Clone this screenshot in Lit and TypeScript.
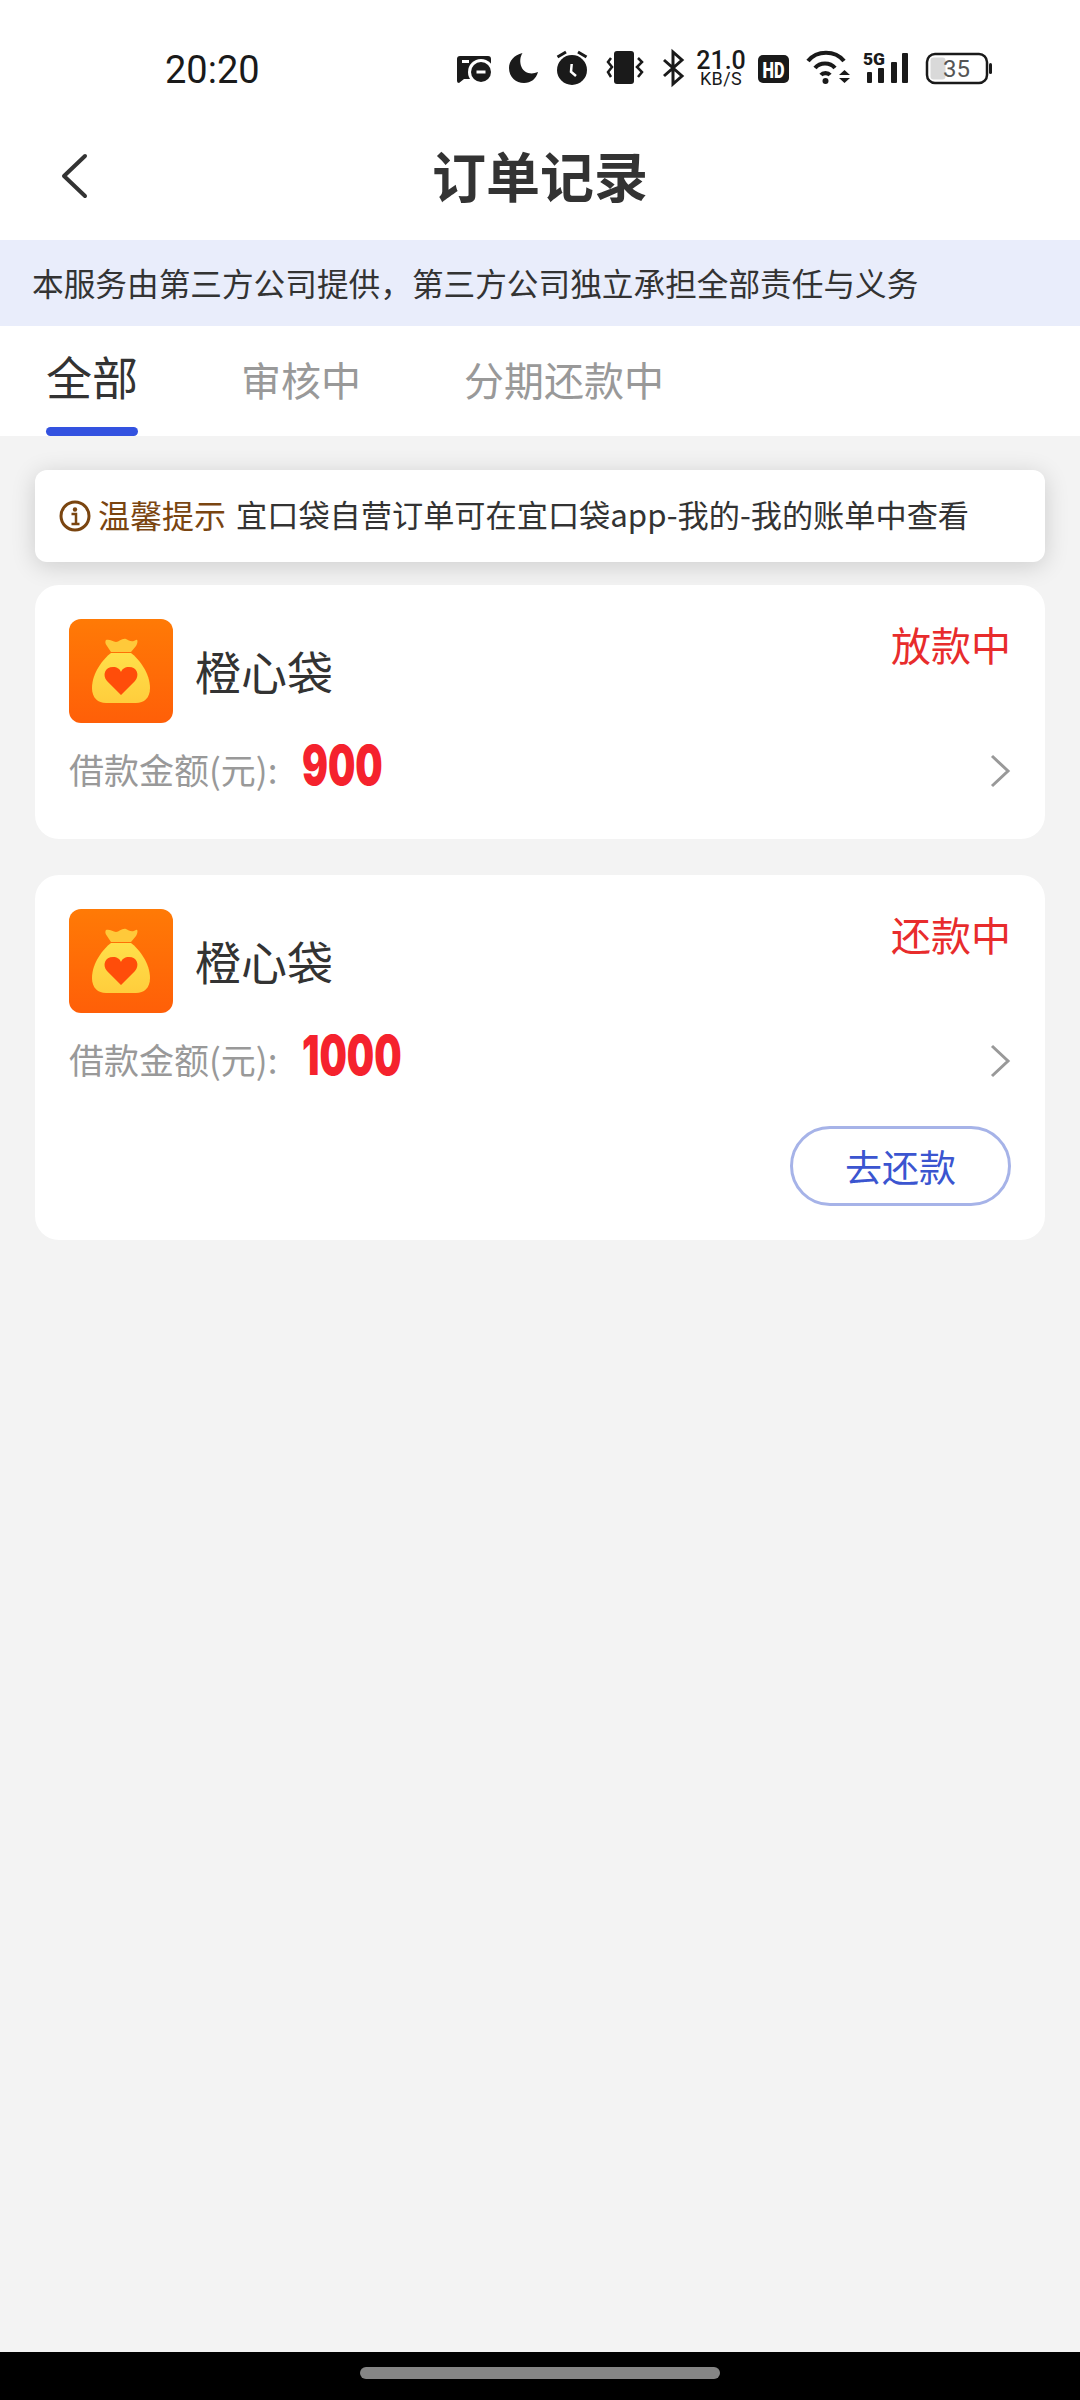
import { LitElement, html, css } from "lit";
import { customElement, property } from "lit/decorators.js";

const CJK = css`"Noto Sans CJK SC", Roboto, sans-serif`;

@customElement("order-card")
export class OrderCard extends LitElement {
  @property() name = "";
  @property() status = "";
  @property() amount = "";
  @property({ type: Boolean }) repay = false;

  static styles = css`
    :host {
      display: block;
      background: #fff;
      border-radius: 24px;
      padding: 34px 34px 34px;
      margin-bottom: 36px;
      font-family: ${CJK};
    }
    .head {
      display: flex;
      justify-content: space-between;
      align-items: flex-start;
    }
    .brand {
      display: flex;
      align-items: center;
      gap: 22px;
    }
    .logo {
      width: 104px;
      height: 104px;
      display: block;
    }
    .name {
      font-size: 46px;
      color: #333;
      margin-top: -3px;
    }
    .status {
      font-size: 40px;
      line-height: 56px;
      color: #e82c2c;
      margin-top: -3px;
    }
    .row {
      display: flex;
      align-items: center;
      height: 60px;
      margin: 15px 0 7px;
    }
    .label {
      font-size: 35px;
      color: #999;
      width: 233px;
    }
    .amount {
      font-family: Inter, Roboto, sans-serif;
      font-weight: 900;
      font-size: 55px;
      color: #f5222d;
      transform: scaleX(0.7);
      transform-origin: left center;
      flex: 1;
      margin-top: -6px;
    }
    .more {
      width: 22px;
      height: 36px;
      margin-top: 5px;
    }
    .actions {
      display: flex;
      justify-content: flex-end;
      margin-top: 38px;
    }
    .pay {
      width: 221px;
      height: 80px;
      box-sizing: border-box;
      display: flex;
      align-items: center;
      justify-content: center;
      border: 3px solid #a6b3e8;
      border-radius: 40px;
      font-size: 37px;
      color: #3b55d0;
    }
  `;

  render() {
    return html`
      <div class="head">
        <div class="brand">
          <svg class="logo" viewBox="0 0 104 104">
            <defs>
              <linearGradient id="bg" x1="0" y1="0" x2="0" y2="1">
                <stop offset="0" stop-color="#ff7a06" />
                <stop offset="1" stop-color="#ff5f08" />
              </linearGradient>
              <linearGradient id="bag" x1="0" y1="0" x2="0" y2="1">
                <stop offset="0" stop-color="#ffe04a" />
                <stop offset="1" stop-color="#ffcd3c" />
              </linearGradient>
            </defs>
            <rect width="104" height="104" rx="12" fill="url(#bg)" />
            <path d="M37 21 C41 20 44 23 47 23 C50 23 53 19 57 20 C60 21 62 24 67 21 C69 20 69 24 67 27 L62 33 L42 33 L38 27 C36 25 36 22 37 21Z" fill="#ffc93a" />
            <path d="M42 34 H62 C70 40 81 54 81 69 C81 79 75 84 67 84 H37 C29 84 23 79 23 69 C23 54 34 40 42 34Z" fill="url(#bag)" />
            <path d="M52 76 L38 62 C33 56 36 48 44 48 C48 48 51 50 52 53 C53 50 56 48 60 48 C68 48 71 56 66 62 Z" fill="#ff4d0a" />
          </svg>
          <span class="name">${this.name}</span>
        </div>
        <span class="status">${this.status}</span>
      </div>
      <div class="row">
        <span class="label">借款金额(元):</span>
        <span class="amount">${this.amount}</span>
        <svg class="more" viewBox="0 0 22 36">
          <path d="M3 3 L19 18 L3 33" fill="none" stroke="#999" stroke-width="3" />
        </svg>
      </div>
      ${this.repay ? html`<div class="actions"><div class="pay">去还款</div></div>` : ""}
    `;
  }
}

@customElement("app-root")
export class AppRoot extends LitElement {
  static styles = css`
    :host {
      display: flex;
      flex-direction: column;
      height: 2400px;
      background: #f3f3f3;
      font-family: ${CJK};
    }
    .statusbar {
      height: 84px;
      padding-top: 28px;
      display: flex;
      align-items: center;
      background: #fff;
    }
    .time {
      font-family: Roboto, sans-serif;
      font-size: 38px;
      color: #1a1a1a;
      margin-left: 165px;
      width: 291px;
    }
    .icons {
      display: flex;
      align-items: center;
      gap: 16px;
    }
    .icons svg {
      display: block;
      height: 40px;
      overflow: visible;
    }
    .speed {
      width: 42px;
      margin-top: -3px;
      display: flex;
      flex-direction: column;
      align-items: center;
      font-family: Roboto, sans-serif;
      color: #1a1a1a;
      white-space: nowrap;
    }
    .speed b {
      font-weight: 500;
      font-size: 25px;
      line-height: 21px;
    }
    .speed span {
      font-size: 18px;
      line-height: 16px;
      font-weight: 400;
      letter-spacing: 0.4px;
    }
    .nav {
      height: 124px;
      padding-bottom: 4px;
      background: #fff;
      display: flex;
      align-items: center;
      justify-content: center;
      position: relative;
    }
    .back {
      position: absolute;
      left: 60px;
      top: 41px;
      width: 28px;
      height: 46px;
    }
    .title {
      font-size: 54px;
      font-weight: 700;
      color: #333;
    }
    .notice-bar {
      height: 84px;
      padding: 0 0 2px 32px;
      background: #e9edfb;
      display: flex;
      align-items: center;
      font-size: 31.67px;
      color: #333;
    }
    .tabs {
      height: 110px;
      background: #fff;
      display: flex;
      padding-left: 46px;
      gap: 103px;
    }
    .tab {
      display: flex;
      flex-direction: column;
      align-items: center;
      padding-top: 21px;
      font-size: 40px;
      line-height: 64px;
      color: #999;
    }
    .tab.active {
      padding-top: 17px;
      font-size: 46px;
      color: #333;
    }
    .bar {
      margin-top: auto;
      width: 92px;
      height: 9px;
      border-radius: 5px;
      background: #3352e0;
    }
    main {
      flex: 1;
      padding: 34px 35px 0;
    }
    .tip {
      height: 92px;
      display: flex;
      align-items: center;
      padding-left: 24px;
      margin-bottom: 23px;
      background: #fff;
      border-radius: 12px;
      box-shadow: 0 4px 24px rgba(0, 0, 0, 0.16);
      font-size: 31.2px;
      color: #333;
    }
    .tip svg {
      width: 32px;
      height: 32px;
      margin-right: 7px;
    }
    .tip b {
      font-weight: 400;
      font-size: 32px;
      color: #7a4510;
      margin-right: 10px;
      margin-bottom: 5px;
    }
    .tip span {
      margin-bottom: 5px;
    }
    .gesture {
      height: 48px;
      background: #000;
      display: flex;
      justify-content: center;
      padding-top: 15px;
      box-sizing: border-box;
    }
    .pill {
      width: 360px;
      height: 12px;
      border-radius: 6px;
      background: #858585;
    }
  `;

  orders = [
    { name: "橙心袋", status: "放款中", amount: "900", repay: false },
    { name: "橙心袋", status: "还款中", amount: "1000", repay: true },
  ];

  renderStatusIcons() {
    return html`
      <div class="icons">
        <svg style="width:37px" viewBox="0 0 37 40">
          <path d="M1 9 Q1 6 4 6 H32 Q35 6 35 9 V22 H15 V29 H8 L3 33 Q1 33 1 31Z" fill="#1a1a1a" />
          <rect x="6" y="10" width="7" height="3" fill="#fff" />
          <circle cx="25" cy="22" r="13" fill="#fff" />
          <circle cx="25" cy="22" r="10" fill="#1a1a1a" />
          <rect x="20.5" y="20.5" width="9" height="3" fill="#fff" />
        </svg>
        <svg style="width:32px" viewBox="0 0 32 40">
          <path d="M13.5 3 C5 5 0 11 0 18 C0 27 7 33 15 33 C22 33 27 29 29 22 C22 25 15 23 12.5 17 C10.5 12 11 7 13.5 3Z" fill="#1a1a1a" />
        </svg>
        <svg style="width:34px" viewBox="0 0 34 40">
          <circle cx="15" cy="20" r="15" fill="#1a1a1a" />
          <path d="M14.7 14 L14 21.7 L19 26" fill="none" stroke="#fff" stroke-width="2.5" />
          <path d="M0.5 7 L9 2 M29.5 7 L21 2" stroke="#1a1a1a" stroke-width="3" />
        </svg>
        <svg style="width:40px" viewBox="0 0 40 40">
          <rect x="7" y="1" width="20" height="33" rx="3" fill="#1a1a1a" />
          <path d="M4 8 L1 12 L5 17 L1 22 L4 27 M31 8 L35 12 L30 17 L35 22 L31 27" fill="none" stroke="#1a1a1a" stroke-width="2.5" />
        </svg>
        <svg style="width:21px" viewBox="0 0 21 40">
          <path d="M1 10 L19 26 L10 34 V2 L19 10 L1 26" fill="none" stroke="#1a1a1a" stroke-width="3" />
        </svg>
        <div class="speed"><b>21.0</b><span>KB/S</span></div>
        <svg style="width:31px" viewBox="0 0 31 40">
          <rect y="5" width="31" height="28" rx="5" fill="#1a1a1a" />
          <text x="15.5" y="27.5" text-anchor="middle" font-family="Roboto" font-weight="900" font-size="22" textLength="22" lengthAdjust="spacingAndGlyphs" fill="#fff">HD</text>
        </svg>
        <svg style="width:42px" viewBox="0 0 42 40">
          <path d="M3 11 C12 0 30 0 39 11 M10 18 C15 12 25 12 30 18 M16 25 C18 22.5 23 22.5 25 25" fill="none" stroke="#1a1a1a" stroke-width="4.2" />
          <circle cx="20.5" cy="31" r="3" fill="#1a1a1a" />
          <path d="M39.5 20 L45 25 H34Z M39.5 33 L45 28 H34Z" fill="#1a1a1a" />
        </svg>
        <svg style="width:46px" viewBox="0 0 46 40">
          <text x="0" y="15" font-family="Roboto" font-weight="900" font-size="17" textLength="22" lengthAdjust="spacingAndGlyphs" fill="#1a1a1a">5G</text>
          <rect x="4" y="22" width="5" height="11" rx="1" fill="#1a1a1a" />
          <rect x="15" y="18" width="6" height="15" rx="1" fill="#1a1a1a" />
          <rect x="28" y="12" width="6" height="21" rx="1" fill="#1a1a1a" />
          <rect x="39" y="3" width="6" height="30" rx="1" fill="#1a1a1a" />
        </svg>
        <svg style="width:68px" viewBox="0 0 68 40">
          <rect x="2" y="4" width="60" height="29" rx="8" fill="#fff" stroke="#1a1a1a" stroke-width="2.5" />
          <rect x="5.5" y="7.5" width="15" height="22" rx="3" fill="#d9d9d9" />
          <text x="31.5" y="27" text-anchor="middle" font-family="Roboto" font-size="24" fill="#555">35</text>
          <rect x="64" y="13" width="3" height="11" rx="1.5" fill="#1a1a1a" />
        </svg>
      </div>
    `;
  }

  render() {
    return html`
      <div class="statusbar">
        <span class="time">20:20</span>
        ${this.renderStatusIcons()}
      </div>
      <div class="nav">
        <svg class="back" viewBox="0 0 28 46">
          <path d="M25 3 L4 23 L25 43" fill="none" stroke="#333" stroke-width="4" stroke-linecap="round" stroke-linejoin="round" />
        </svg>
        <span class="title">订单记录</span>
      </div>
      <div class="notice-bar">本服务由第三方公司提供，第三方公司独立承担全部责任与义务</div>
      <div class="tabs">
        <div class="tab active">全部<div class="bar"></div></div>
        <div class="tab">审核中</div>
        <div class="tab">分期还款中</div>
      </div>
      <main>
        <div class="tip">
          <svg viewBox="0 0 32 32">
            <circle cx="16" cy="16" r="14" fill="none" stroke="#7a4510" stroke-width="3" />
            <circle cx="16" cy="9.5" r="2.2" fill="#7a4510" />
            <path d="M12.5 14 H17 V23 M12.5 24 H20.5" fill="none" stroke="#7a4510" stroke-width="2.5" />
          </svg>
          <b>温馨提示</b><span>宜口袋自营订单可在宜口袋app-我的-我的账单中查看</span>
        </div>
        ${this.orders.map(
          (o) => html`<order-card
            .name=${o.name}
            .status=${o.status}
            .amount=${o.amount}
            .repay=${o.repay}
          ></order-card>`
        )}
      </main>
      <div class="gesture"><div class="pill"></div></div>
    `;
  }
}
